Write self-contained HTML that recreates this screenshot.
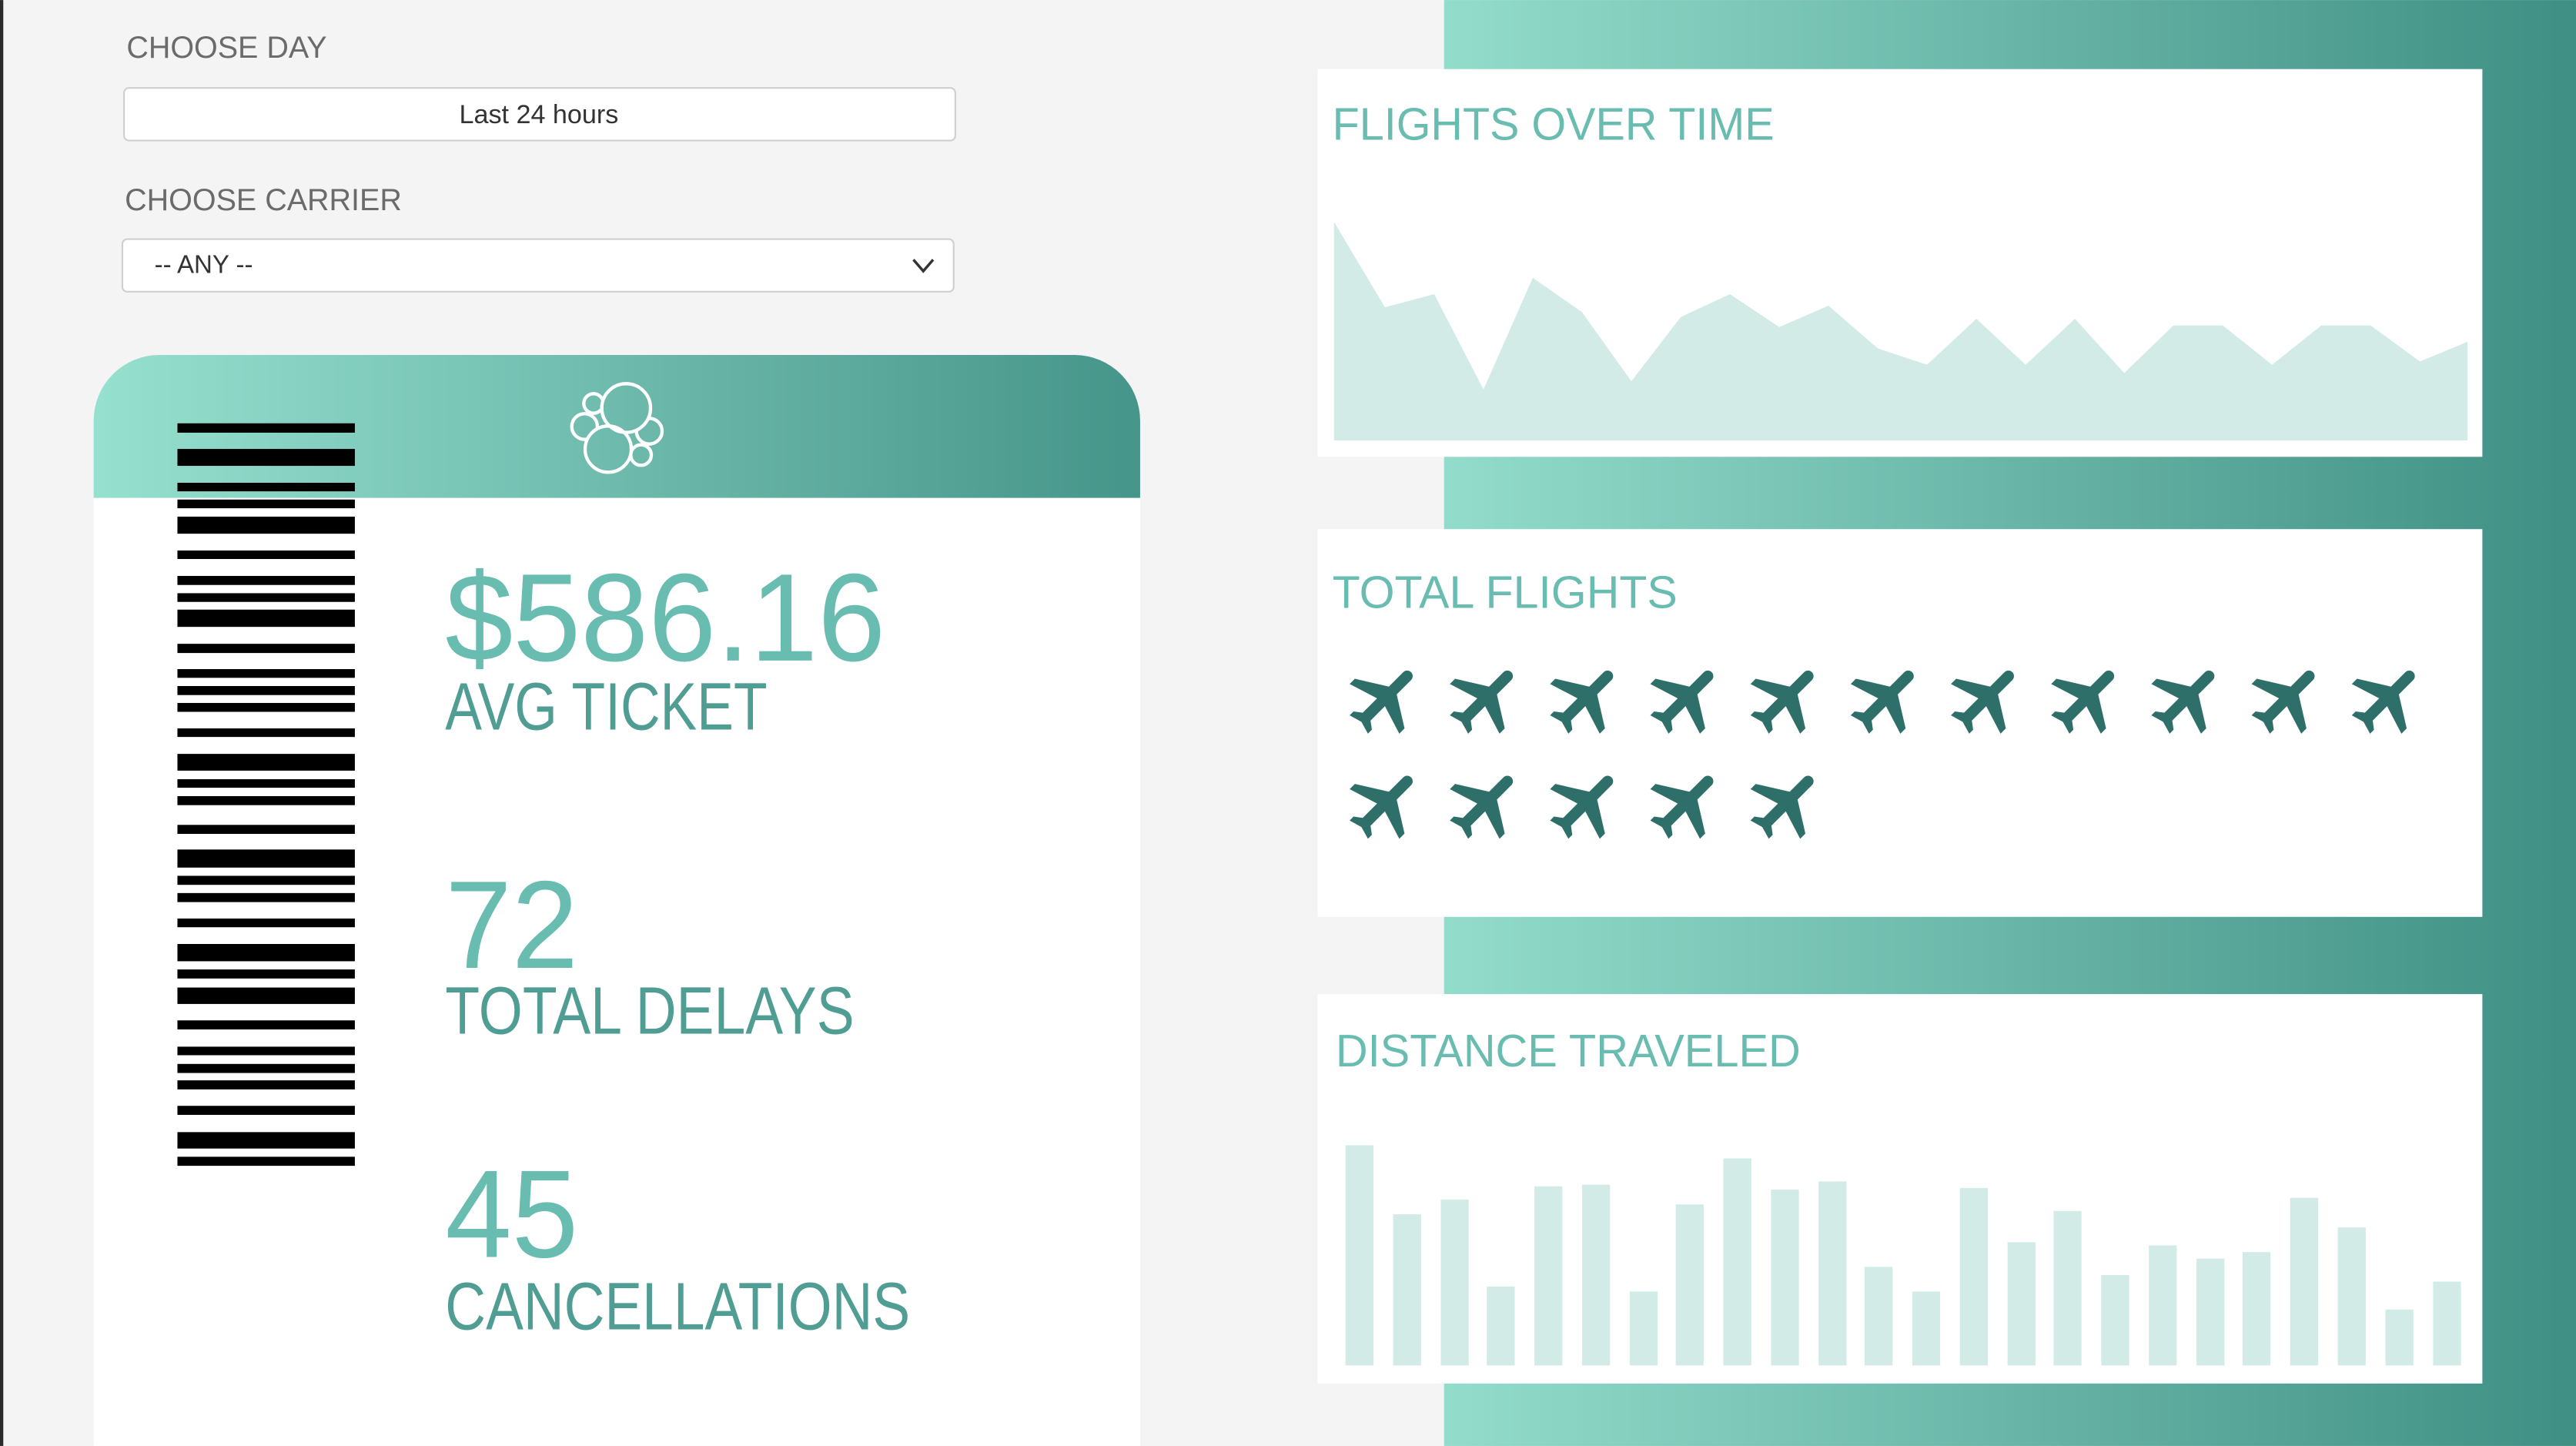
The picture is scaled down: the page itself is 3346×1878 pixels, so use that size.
<!DOCTYPE html>
<html><head><meta charset="utf-8"><style>
html,body{margin:0;padding:0;width:3346px;height:1878px;overflow:hidden;background:#f4f4f4}
svg{position:absolute;left:0;top:0}
text{font-family:"Liberation Sans",sans-serif}
</style></head><body>
<svg width="3346" height="1878" viewBox="0 0 1568 880" xmlns="http://www.w3.org/2000/svg">
<defs>
<linearGradient id="g1" x1="0" x2="1" y1="0" y2="0"><stop offset="0" stop-color="#93dccb"/><stop offset="1" stop-color="#3f8f84"/></linearGradient>
<linearGradient id="g2" x1="0" x2="1" y1="0" y2="0"><stop offset="0" stop-color="#96e0cf"/><stop offset="1" stop-color="#46958a"/></linearGradient>
<g id="pl"><path fill="#2f6f69" d="M21 16v-2l-8-5V3.5c0-.83-.67-1.5-1.5-1.5S10 2.67 10 3.5V9l-8 5v2l8-2.5V19l-2 1.5V22l3.5-1 3.5 1v-1.5L13 19v-5.5l8 2.5z"/></g>
<mask id="lm" maskUnits="userSpaceOnUse" x="0" y="0" width="500" height="500">
<rect x="0" y="0" width="500" height="500" fill="#fff"/>
<circle cx="280" cy="150" r="92" fill="#000"/>
<circle cx="210" cy="310" r="87" fill="#000"/>
</mask>
</defs>
<rect x="0" y="0" width="1568" height="880" fill="#f4f4f4"/>
<rect x="0" y="0" width="2" height="880" fill="#2a2a2a"/>
<rect x="879" y="0" width="689" height="880" fill="url(#g1)"/>

<text x="77" y="35" font-size="18.5" fill="#6b6b6b">CHOOSE DAY</text>
<rect x="75.5" y="53.5" width="506" height="32" rx="3" fill="#fff" stroke="#cfcfcf"/>
<text x="328" y="75" font-size="16" fill="#333" text-anchor="middle">Last 24 hours</text>
<text x="76" y="128" font-size="18.5" fill="#6b6b6b">CHOOSE CARRIER</text>
<rect x="74.5" y="145.5" width="506" height="32" rx="3" fill="#fff" stroke="#cfcfcf"/>
<text x="94" y="166" font-size="15.5" fill="#333">-- ANY --</text>
<polyline points="556,158 562,165 568,158" fill="none" stroke="#333" stroke-width="1.6"/>

<path d="M57 880V256a40 40 0 0 1 40-40H654a40 40 0 0 1 40 40V880z" fill="#fff"/>
<path d="M57 303V256a40 40 0 0 1 40-40H654a40 40 0 0 1 40 40V303z" fill="url(#g2)"/>
<g fill="#000">
<rect x="108" y="257.6" width="108" height="5.7"/>
<rect x="108" y="273.2" width="108" height="10.3"/>
<rect x="108" y="293.8" width="108" height="5.2"/>
<rect x="108" y="304" width="108" height="5.3"/>
<rect x="108" y="314.4" width="108" height="10.4"/>
<rect x="108" y="335" width="108" height="5.2"/>
<rect x="108" y="350.5" width="108" height="5.5"/>
<rect x="108" y="361" width="108" height="5.3"/>
<rect x="108" y="371" width="108" height="10.5"/>
<rect x="108" y="391.8" width="108" height="5.6"/>
<rect x="108" y="407.2" width="108" height="5.3"/>
<rect x="108" y="417.5" width="108" height="5.5"/>
<rect x="108" y="427.8" width="108" height="5.4"/>
<rect x="108" y="443.3" width="108" height="5.2"/>
<rect x="108" y="458.8" width="108" height="10.2"/>
<rect x="108" y="474.2" width="108" height="5.2"/>
<rect x="108" y="484.5" width="108" height="5.5"/>
<rect x="108" y="502" width="108" height="5.5"/>
<rect x="108" y="517" width="108" height="11"/>
<rect x="108" y="533" width="108" height="5.5"/>
<rect x="108" y="543.5" width="108" height="5.5"/>
<rect x="108" y="559" width="108" height="5.3"/>
<rect x="108" y="574.5" width="108" height="10.5"/>
<rect x="108" y="590" width="108" height="5.5"/>
<rect x="108" y="601" width="108" height="10"/>
<rect x="108" y="621" width="108" height="5.5"/>
<rect x="108" y="637" width="108" height="5.2"/>
<rect x="108" y="647.5" width="108" height="5.5"/>
<rect x="108" y="657.5" width="108" height="5.5"/>
<rect x="108" y="673" width="108" height="5.5"/>
<rect x="108" y="689" width="108" height="10"/>
<rect x="108" y="704" width="108" height="5.5"/>
</g>
<g fill="none" stroke="#fff" stroke-width="13" transform="translate(337.4 224.9) scale(0.1562)">
<g mask="url(#lm)">
<circle cx="118" cy="222" r="50"/>
<circle cx="153" cy="132" r="38"/>
<circle cx="370" cy="240" r="50"/>
<circle cx="338" cy="333" r="40"/>
</g>
<circle cx="280" cy="150" r="95"/>
<circle cx="210" cy="310" r="90"/>
</g>

<text x="271" y="402" font-size="76" fill="#69bcb0" textLength="268" lengthAdjust="spacingAndGlyphs">$586.16</text>
<text x="271" y="444" font-size="41" fill="#4f9d93" textLength="196" lengthAdjust="spacingAndGlyphs">AVG TICKET</text>
<text x="271" y="589" font-size="76" fill="#69bcb0" textLength="81" lengthAdjust="spacingAndGlyphs">72</text>
<text x="271" y="629" font-size="41" fill="#4f9d93" textLength="249" lengthAdjust="spacingAndGlyphs">TOTAL DELAYS</text>
<text x="271" y="765" font-size="76" fill="#69bcb0" textLength="81" lengthAdjust="spacingAndGlyphs">45</text>
<text x="271" y="809" font-size="41" fill="#4f9d93" textLength="283" lengthAdjust="spacingAndGlyphs">CANCELLATIONS</text>

<rect x="802" y="42" width="709" height="236" fill="#fff"/>
<rect x="802" y="322" width="709" height="236" fill="#fff"/>
<rect x="802" y="605" width="709" height="237" fill="#fff"/>

<text x="811" y="85" font-size="28" fill="#69bcb0" textLength="269" lengthAdjust="spacingAndGlyphs">FLIGHTS OVER TIME</text>
<text x="811" y="370" font-size="28" fill="#69bcb0" textLength="210" lengthAdjust="spacingAndGlyphs">TOTAL FLIGHTS</text>
<text x="813" y="649" font-size="28" fill="#69bcb0" textLength="283" lengthAdjust="spacingAndGlyphs">DISTANCE TRAVELED</text>

<polygon fill="#d3ebe6" points="812,268 812,135 843,187 873,179 903,237 933,169 963,190 993,232 1023,193 1053,179 1083,199 1113,186 1143,212 1173,222 1203,194 1233,222 1263,194 1293,227 1323,198 1353,198 1383,222 1413,198 1443,198 1473,220 1502,208 1502,268"/>

<g>
<use href="#pl" transform="translate(843 425) rotate(45) scale(2.25) translate(-11.5 -12)"/>
<use href="#pl" transform="translate(904 425) rotate(45) scale(2.25) translate(-11.5 -12)"/>
<use href="#pl" transform="translate(965 425) rotate(45) scale(2.25) translate(-11.5 -12)"/>
<use href="#pl" transform="translate(1026 425) rotate(45) scale(2.25) translate(-11.5 -12)"/>
<use href="#pl" transform="translate(1087 425) rotate(45) scale(2.25) translate(-11.5 -12)"/>
<use href="#pl" transform="translate(1148 425) rotate(45) scale(2.25) translate(-11.5 -12)"/>
<use href="#pl" transform="translate(1209 425) rotate(45) scale(2.25) translate(-11.5 -12)"/>
<use href="#pl" transform="translate(1270 425) rotate(45) scale(2.25) translate(-11.5 -12)"/>
<use href="#pl" transform="translate(1331 425) rotate(45) scale(2.25) translate(-11.5 -12)"/>
<use href="#pl" transform="translate(1392 425) rotate(45) scale(2.25) translate(-11.5 -12)"/>
<use href="#pl" transform="translate(1453 425) rotate(45) scale(2.25) translate(-11.5 -12)"/>
<use href="#pl" transform="translate(843 489) rotate(45) scale(2.25) translate(-11.5 -12)"/>
<use href="#pl" transform="translate(904 489) rotate(45) scale(2.25) translate(-11.5 -12)"/>
<use href="#pl" transform="translate(965 489) rotate(45) scale(2.25) translate(-11.5 -12)"/>
<use href="#pl" transform="translate(1026 489) rotate(45) scale(2.25) translate(-11.5 -12)"/>
<use href="#pl" transform="translate(1087 489) rotate(45) scale(2.25) translate(-11.5 -12)"/>
</g>

<g fill="#d3ebe6">
<rect x="819" y="697" width="17" height="134"/>
<rect x="848" y="739" width="17" height="92"/>
<rect x="877" y="730" width="17" height="101"/>
<rect x="905" y="783" width="17" height="48"/>
<rect x="934" y="722" width="17" height="109"/>
<rect x="963" y="721" width="17" height="110"/>
<rect x="992" y="786" width="17" height="45"/>
<rect x="1020" y="733" width="17" height="98"/>
<rect x="1049" y="705" width="17" height="126"/>
<rect x="1078" y="724" width="17" height="107"/>
<rect x="1107" y="719" width="17" height="112"/>
<rect x="1135" y="771" width="17" height="60"/>
<rect x="1164" y="786" width="17" height="45"/>
<rect x="1193" y="723" width="17" height="108"/>
<rect x="1222" y="756" width="17" height="75"/>
<rect x="1250" y="737" width="17" height="94"/>
<rect x="1279" y="776" width="17" height="55"/>
<rect x="1308" y="758" width="17" height="73"/>
<rect x="1337" y="766" width="17" height="65"/>
<rect x="1365" y="762" width="17" height="69"/>
<rect x="1394" y="729" width="17" height="102"/>
<rect x="1423" y="747" width="17" height="84"/>
<rect x="1452" y="797" width="17" height="34"/>
<rect x="1481" y="780" width="17" height="51"/>
</g>
</svg>
</body></html>
